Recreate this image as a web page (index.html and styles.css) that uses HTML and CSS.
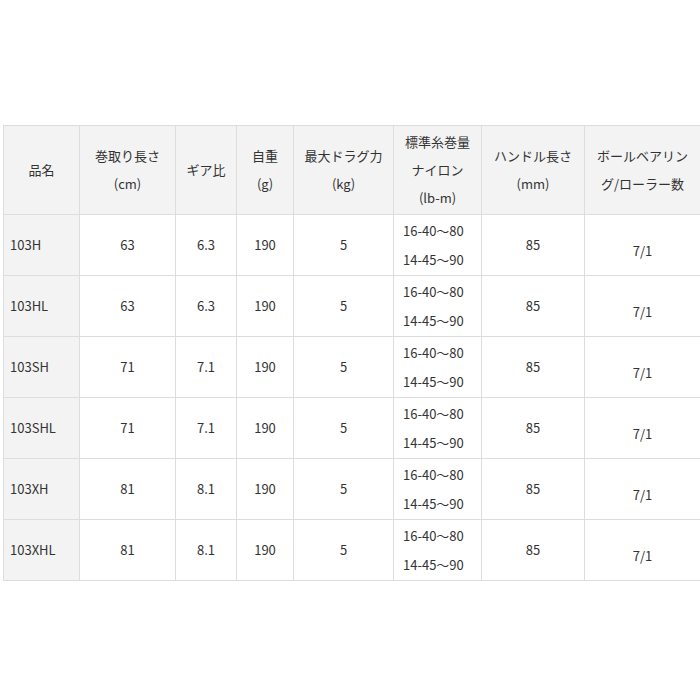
FILE: index.html
```html
<!DOCTYPE html>
<html lang="ja">
<head>
<meta charset="utf-8">
<link rel="stylesheet" href="styles.css">
</head>
<body>
<div class="page">
<table class="spec">
<colgroup>
<col class="c1"><col class="c2"><col class="c3"><col class="c4"><col class="c5"><col class="c6"><col class="c7"><col class="c8">
</colgroup>
<thead>
<tr>
<th class="name">品名</th>
<th>巻取り長さ<br>(cm)</th>
<th>ギア比</th>
<th>自重<br>(g)</th>
<th>最大ドラグ力<br>(kg)</th>
<th>標準糸巻量<br>ナイロン<br>(lb-m)</th>
<th>ハンドル長さ<br>(mm)</th>
<th>ボールベアリン<br>グ/ローラー数</th>
</tr>
</thead>
<tbody>
<tr><th class="name">103H</th><td>63</td><td>6.3</td><td>190</td><td>5</td><td class="line">16-40～80<br>14-45～90</td><td>85</td><td class="bb">7/1</td></tr>
<tr><th class="name">103HL</th><td>63</td><td>6.3</td><td>190</td><td>5</td><td class="line">16-40～80<br>14-45～90</td><td>85</td><td class="bb">7/1</td></tr>
<tr><th class="name">103SH</th><td>71</td><td>7.1</td><td>190</td><td>5</td><td class="line">16-40～80<br>14-45～90</td><td>85</td><td class="bb">7/1</td></tr>
<tr><th class="name">103SHL</th><td>71</td><td>7.1</td><td>190</td><td>5</td><td class="line">16-40～80<br>14-45～90</td><td>85</td><td class="bb">7/1</td></tr>
<tr><th class="name">103XH</th><td>81</td><td>8.1</td><td>190</td><td>5</td><td class="line">16-40～80<br>14-45～90</td><td>85</td><td class="bb">7/1</td></tr>
<tr><th class="name">103XHL</th><td>81</td><td>8.1</td><td>190</td><td>5</td><td class="line">16-40～80<br>14-45～90</td><td>85</td><td class="bb">7/1</td></tr>
</tbody>
</table>
</div>
</body>
</html>
```
FILE: styles.css
```css
html, body {
  margin: 0;
  padding: 0;
  background: #fff;
}
body {
  font-family: "Noto Sans CJK JP", "Noto Sans", sans-serif;
  color: #333;
  font-size: 13px;
}
.page {
  padding: 125px 0 0 3px;
  width: 700px;
}
.spec {
  border-collapse: collapse;
  table-layout: fixed;
  width: 697px;
}
.c1 { width: 76px; }
.c2 { width: 96px; }
.c3 { width: 61px; }
.c4 { width: 57px; }
.c5 { width: 100px; }
.c6 { width: 88px; }
.c7 { width: 103px; }
.c8 { width: 116px; }
.spec th, .spec td {
  border: 1px solid #ddd;
  text-align: center;
  vertical-align: middle;
  font-weight: normal;
  line-height: 28px;
  padding: 0;
}
.spec thead th {
  background: #f3f3f3;
  height: 88px;
}
.spec tbody td, .spec tbody th {
  height: 60px;
}
.spec .name {
  text-align: left;
  padding-left: 6px;
  background: #f3f3f3;
}
.spec thead .name {
  text-align: center;
  padding-left: 0;
}
.spec .line {
  line-height: 29px;
  text-align: left;
  padding-left: 9px;
}
.spec tbody .bb {
  padding-top: 12px;
  height: 48px;
}
```
